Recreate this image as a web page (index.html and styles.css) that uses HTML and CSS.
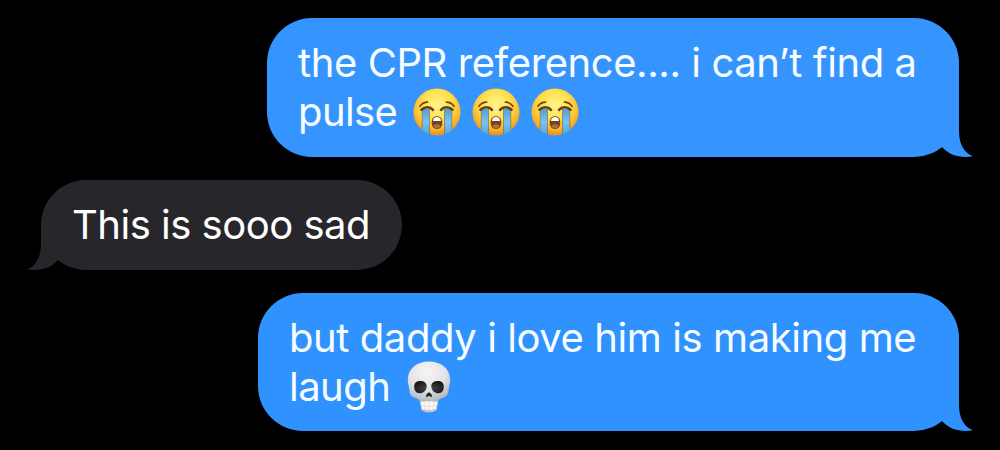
FILE: index.html
```html
<!DOCTYPE html>
<html lang="en">
<head>
    <meta charset="UTF-8">
    <meta name="viewport" content="width=device-width, initial-scale=1.0">
    <title>Messages</title>
    <link rel="stylesheet" href="styles.css">
</head>
<body>
    <!-- shared shapes -->
    <svg class="defs" aria-hidden="true">
        <defs>
            <radialGradient id="face" cx="50%" cy="36%" r="64%">
                <stop offset="0" stop-color="#fff58e"/>
                <stop offset="0.5" stop-color="#fee04c"/>
                <stop offset="0.8" stop-color="#fbb52c"/>
                <stop offset="1" stop-color="#ea8a1c"/>
            </radialGradient>
            <linearGradient id="tear" x1="0" y1="0" x2="0" y2="1">
                <stop offset="0" stop-color="#4d9fdc"/>
                <stop offset="0.5" stop-color="#7cc4ee"/>
                <stop offset="1" stop-color="#4ba6e5"/>
            </linearGradient>
            <clipPath id="faceClip">
                <circle cx="24" cy="24" r="23.5"/>
            </clipPath>
            <radialGradient id="bone" cx="46%" cy="25%" r="72%">
                <stop offset="0" stop-color="#f5f5f6"/>
                <stop offset="0.6" stop-color="#e4e4e7"/>
                <stop offset="1" stop-color="#b3b6bd"/>
            </radialGradient>
            <radialGradient id="socket" cx="50%" cy="60%" r="60%">
                <stop offset="0" stop-color="#494949"/>
                <stop offset="1" stop-color="#171719"/>
            </radialGradient>

            <symbol id="tail" viewBox="0 0 32 50">
                <path d="M0 0H18V24C18 37 23 46 32 49.3C19 51.5 8 48 1 40L0 39Z"/>
            </symbol>

            <symbol id="sob" viewBox="0 0 48 48">
                <circle cx="24" cy="24" r="23.5" fill="url(#face)"/>
                <g clip-path="url(#faceClip)">
                    <path d="M9.2 21H16.5V47H9.2ZM31.5 21H38.8V47H31.5Z" fill="url(#tear)"/>
                    <path d="M9.2 21V42M16.5 21V46M31.5 21V46M38.8 21V42" fill="none" stroke="#77774f" stroke-width="0.7"/>
                </g>
                <path d="M7 18.3C9 15.6 11.5 14.2 14.5 14.2M33.5 14.2C36.5 14.2 39 15.6 41 18.3" fill="none" stroke="#754215" stroke-width="1.7" stroke-linecap="round"/>
                <path d="M8.5 21.7C12 18.5 17 18.5 20 21.8M28 21.8C31 18.5 36 18.5 39.5 21.7" fill="none" stroke="#6a3d16" stroke-width="2.6" stroke-linecap="round"/>
                <path d="M24 28.2C27.3 28.2 29.3 30.4 29.3 34.3C29.3 38.7 27.5 41 24 41S18.7 38.7 18.7 34.3C18.7 30.4 20.7 28.2 24 28.2Z" fill="#79431b"/>
                <path d="M19.9 32.2C20.6 30 22 29 24 29S27.4 30 28.1 32.2Q28 33.1 27 33.1H21Q20 33.1 19.9 32.2Z" fill="#fff"/>
                <path d="M20.2 37.7Q24 34.8 27.8 37.7Q27 40.3 24 40.3T20.2 37.7Z" fill="#a87537"/>
            </symbol>

            <symbol id="skull" viewBox="0 0 44 52">
                <path d="M12.7 37.5H31.3L29.8 48.5Q27.5 51.5 22 51.5T14.2 48.5Z" fill="#c5c6cb"/>
                <path d="M22 .5C35 .5 43.2 8.5 43.2 18.8C43.2 23.4 41.8 26 41.5 29.5C41.2 34.5 38.5 36.4 34 37.5C31.5 38.3 31.5 42.2 27.5 42.2H16.5C12.5 42.2 12.5 38.3 10 37.5C5.5 36.4 2.8 34.5 2.5 29.5C2.2 26 .8 23.4 .8 18.8C.8 8.5 9 .5 22 .5Z" fill="url(#bone)"/>
                <path d="M7.2 25.5C7.2 21.3 10.2 19.7 14 20C18 20.3 20.2 22.8 19.6 26.2C19 29.8 16.5 32.2 12.6 32.2C9 32.2 7.2 29.5 7.2 25.5ZM36.8 25.5C36.8 21.3 33.8 19.7 30 20C26 20.3 23.8 22.8 24.4 26.2C25 29.8 27.5 32.2 31.4 32.2C35 32.2 36.8 29.5 36.8 25.5Z" fill="url(#socket)"/>
                <path d="M22 31.5C23.4 31.5 25.2 34 25 35.3C24.7 36.5 23.2 35.7 22 34.8C20.8 35.7 19.3 36.5 19 35.3C18.8 34 20.6 31.5 22 31.5Z" fill="#222"/>
                <path d="M14 41Q22 39.6 30 41L29.3 48Q22 50.4 14.7 48Z" fill="#cfc6c0"/>
                <g fill="#faf8f5">
                    <rect x="13.7" y="40.6" width="3.3" height="4.2" rx="1"/>
                    <rect x="17.3" y="40.2" width="4.5" height="4.8" rx="1"/>
                    <rect x="22.2" y="40.2" width="4.5" height="4.8" rx="1"/>
                    <rect x="27" y="40.6" width="3.3" height="4.2" rx="1"/>
                    <rect x="14.8" y="45" width="3" height="3.3" rx="1"/>
                    <rect x="18.2" y="45.3" width="3.6" height="3.7" rx="1"/>
                    <rect x="22.2" y="45.3" width="3.6" height="3.7" rx="1"/>
                    <rect x="26.2" y="45" width="3" height="3.3" rx="1"/>
                </g>
            </symbol>
        </defs>
    </svg>

    <main class="chat">
        <div class="bubble sent first">
            <p class="line line-cpr">the CPR reference.... i can’t find a</p>
            <p class="line line-pulse">
                <span>pulse</span>
                <span class="emojis">
                    <svg class="sob" role="img" aria-label="😭"><use href="#sob"/></svg>
                    <svg class="sob" role="img" aria-label="😭"><use href="#sob"/></svg>
                    <svg class="sob" role="img" aria-label="😭"><use href="#sob"/></svg>
                </span>
            </p>
            <svg class="tail" aria-hidden="true"><use href="#tail"/></svg>
        </div>

        <div class="bubble received">
            <p class="line line-sad">This is sooo sad</p>
            <svg class="tail" aria-hidden="true"><use href="#tail"/></svg>
        </div>

        <div class="bubble sent last">
            <p class="line line-daddy">but daddy i love him is making me</p>
            <p class="line line-laugh">
                <span>laugh</span>
                <svg class="skull" role="img" aria-label="💀"><use href="#skull"/></svg>
            </p>
            <svg class="tail" aria-hidden="true"><use href="#tail"/></svg>
        </div>
    </main>
</body>
</html>
```
FILE: styles.css
```css
* {
    box-sizing: border-box;
}

body {
    margin: 0;
    height: 450px;
    overflow: hidden;
    background-color: #000;
    color: #fff;
    font-family: Inter, "Liberation Sans", sans-serif;
    font-size: 40px;
    line-height: 48.7px;
    letter-spacing: -0.42px;
}

.defs {
    position: absolute;
    width: 0;
    height: 0;
}

.chat {
    display: flex;
    flex-direction: column;
    gap: 23px;
    padding: 18px 41px 0;
}

.bubble {
    position: relative;
    border-radius: 45px;
    padding: 21px 31px 0;
}

.sent {
    align-self: flex-end;
    background-color: #3092ff;
    color: #f7fdff;
}

.first {
    width: 692px;
    height: 139px;
    background-color: #3694ff;
}

.last {
    width: 701px;
    height: 138px;
}

.received {
    align-self: flex-start;
    width: 361px;
    height: 90px;
    background-color: #27262b;
}

.line {
    display: flex;
    align-items: center;
    height: 48.7px;
    margin: 0;
    white-space: nowrap;
}

.line-sad {
    letter-spacing: -0.5px;
}

.line-pulse {
    gap: 15.5px;
    letter-spacing: -0.6px;
}

.line-laugh {
    gap: 17px;
    letter-spacing: -0.55px;
}

.emojis {
    display: flex;
    gap: 11px;
}

.sob {
    width: 48px;
    height: 48px;
}

.skull {
    width: 44px;
    height: 52px;
}

/* little hook in the bottom corner */
.tail {
    position: absolute;
    right: -14px;
    bottom: 0;
    width: 32px;
    height: 50px;
    fill: #3092ff;
}

.first .tail {
    fill: #3694ff;
}

.received .tail {
    right: auto;
    left: -14px;
    fill: #27262b;
    transform: scaleX(-1);
}
```
